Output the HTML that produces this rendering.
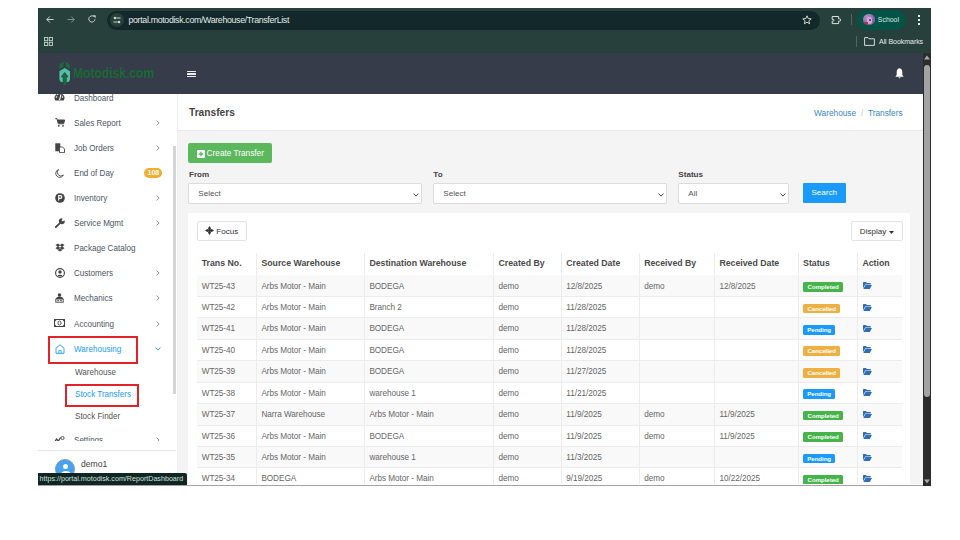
<!DOCTYPE html>
<html><head><meta charset="utf-8">
<style>
*{box-sizing:border-box;margin:0;padding:0}
html,body{width:960px;height:540px;background:#fff;overflow:hidden;font-family:"Liberation Sans",sans-serif}
.abs{position:absolute}
#win{position:absolute;left:38px;top:8px;width:893px;height:478px;overflow:hidden;background:#f4f4f4}
#chrome{position:absolute;left:0;top:0;width:893px;height:45px;background:#27403b}
#addr{position:absolute;left:68.5px;top:2.5px;width:713px;height:19px;border-radius:10px;background:#13282a}
#url{position:absolute;left:90.5px;top:7px;font-size:8.8px;color:#e4ebe9;letter-spacing:-0.33px;white-space:nowrap}
#hdr{position:absolute;left:0;top:45px;width:885px;height:41px;background:#363c4a}
#side{position:absolute;left:0;top:86px;width:140px;height:392px;background:#fff;border-right:1px solid #ededed;overflow:hidden}
#chead{position:absolute;left:140px;top:86px;width:745px;height:37px;background:#fff;border-bottom:1px solid #e9e9e9}
#vscroll{position:absolute;left:885px;top:45px;width:8px;height:433px;background:#2c2c2c}
.si{position:absolute;left:0;width:138px;height:25px;font-size:8.1px;color:#4b5563}
.icw{position:absolute;left:15.8px;top:0;width:12px;height:25px;display:flex;align-items:center;justify-content:center}
.si .t{position:absolute;left:36px;top:0.7px;line-height:25px;white-space:nowrap;font-size:8.65px;transform:scaleX(0.935);transform-origin:0 0}
.si .chev{position:absolute;left:117.8px;top:9.7px}
.si .chevd{position:absolute;left:116.5px;top:10.7px}
.badge{position:absolute;left:106.4px;top:7.8px;width:18px;height:10px;border-radius:5px;background:#f0ad30;color:#fff;font-size:7px;font-weight:bold;text-align:center;line-height:10px}
.sub{position:absolute;left:36.5px;font-size:8.65px;color:#555;line-height:12px;white-space:nowrap;transform:scaleX(0.935);transform-origin:0 0}
#btnCreate{position:absolute;left:150px;top:135.3px;width:84px;height:19.5px;background:#5cb85c;border-radius:2px;color:#fff;font-size:8.1px}
.flbl{position:absolute;top:161px;font-size:8.1px;font-weight:bold;color:#444;line-height:12px}
.sel{position:absolute;top:175.3px;height:20.8px;background:#fff;border:1px solid #dcdcdc;border-radius:2px;font-size:8.1px;color:#555}
.sel span{position:absolute;left:9px;top:0;line-height:20px}
.selchev{position:absolute;right:2px;top:8.5px}
#btnSearch{position:absolute;left:764.6px;top:175px;width:43.3px;height:19.5px;background:#1a9bfc;border-radius:1px;color:#fff;font-size:8.1px;text-align:center;line-height:19.5px}
#card{position:absolute;left:150.3px;top:204.7px;width:722px;height:300px;background:#fff;border-radius:2px}
.bbtn{position:absolute;top:8.8px;height:19.7px;background:#fff;border:1px solid #e3e3e3;border-radius:2px;font-size:8.1px;color:#333}
.hrow,.row{position:absolute;left:0;width:100%}
.th,.td{position:absolute;top:0;height:100%;border-left:1px solid #ececec;padding-left:5px;white-space:nowrap;overflow:hidden}
.th:first-child,.td:first-child{border-left:none;padding-left:5px}
.th,.td{padding-left:4px}
.th{font-size:8.75px;font-weight:bold;color:#4a4a4a;line-height:21px}
.row{border-top:1px solid #ececec}
.td{font-size:8.2px;color:#666;line-height:22.4px;letter-spacing:-0.04px}
.lbl{display:inline-block;height:9.8px;border-radius:1.5px;color:#fff;font-size:6.1px;font-weight:bold;line-height:10px;text-align:center;vertical-align:middle;position:relative;top:0.6px;left:0.1px}
.fold{position:relative;top:0.5px;left:0.5px}
#status{position:absolute;left:0;top:465px;height:12px;padding:0 4px 0 1.5px;background:#0f2624;color:#cfe2dd;font-size:7.15px;line-height:12px;white-space:nowrap;border-top-right-radius:2px}
</style></head><body>
<div id="win">
  <div id="chrome">
    <!-- back -->
    <svg class="abs" style="left:8px;top:8px" width="8" height="8" viewBox="0 0 8 8"><path d="M7.6 3.5H0.8M3.8 0.5L0.8 3.5L3.8 6.5" stroke="#c9d6d2" stroke-width="1" fill="none"/></svg>
    <svg class="abs" style="left:29px;top:8px" width="8" height="8" viewBox="0 0 8 8"><path d="M0.4 3.5H7.2M4.2 0.5L7.2 3.5L4.2 6.5" stroke="#7f9490" stroke-width="1" fill="none"/></svg>
    <svg class="abs" style="left:50px;top:7px" width="8" height="8" viewBox="0 0 8 8"><path d="M7 4.3A3.1 3.1 0 1 1 5.8 1.5" stroke="#c9d6d2" stroke-width="1" fill="none"/><path d="M4.6 0.3H7.6V3.3Z" fill="#c9d6d2"/></svg>
    <div id="addr">
      <div class="abs" style="left:3px;top:2.5px;width:14px;height:14px;border-radius:7px;background:#27403b"></div>
      <svg class="abs" style="left:6px;top:5.5px" width="8" height="8" viewBox="0 0 8 8"><circle cx="2" cy="2" r="1.3" fill="#c9d6d2"/><path d="M3.5 2H7.5M0.5 6H4.5" stroke="#c9d6d2" stroke-width="1"/><circle cx="6" cy="6" r="1.3" fill="#c9d6d2"/></svg>
    </div>
    <div id="url">portal.motodisk.com/Warehouse/TransferList</div>
    <svg class="abs" style="left:764px;top:7px" width="10" height="10" viewBox="0 0 10 10"><path d="M5 0.8L6.2 3.6L9.2 3.8L6.9 5.8L7.6 8.8L5 7.2L2.4 8.8L3.1 5.8L0.8 3.8L3.8 3.6Z" stroke="#e4ebe9" stroke-width="0.9" fill="none"/></svg>
    <svg class="abs" style="left:793px;top:6.5px" width="10" height="10" viewBox="0 0 10 10"><path d="M1.2 1.5H7.6V3.8H8.6A1.1 1.1 0 0 1 8.6 6.1H7.6V8.6H1.2V6.2H2A0.9 0.9 0 0 0 2 4.4H1.2Z" stroke="#e4ebe9" stroke-width="0.95" fill="none" stroke-linejoin="round"/></svg>
    <div class="abs" style="left:813px;top:6px;width:1px;height:11px;background:#4e6560"></div>
    <div class="abs" style="left:819.3px;top:2px;width:48.7px;height:19.5px;border-radius:10px;background:#055347"></div>
    <div class="abs" style="left:825.3px;top:5.8px;width:11.4px;height:11.4px;border-radius:6px;overflow:hidden;background:radial-gradient(circle at 35% 30%,#b792c9 0,#9c6fb3 45%,#6a4a8a 100%)"><div class="abs" style="left:3.5px;top:3px;width:5.5px;height:7px;border-radius:3px;background:#d6a9d4"></div><div class="abs" style="left:5.5px;top:5.5px;width:2px;height:2px;border-radius:1px;background:#4a2a3a"></div><div class="abs" style="left:0;top:8px;width:5px;height:4px;background:#9b3a4a"></div><div class="abs" style="left:9.5px;top:2px;width:2px;height:6px;background:#6a6ab8"></div></div>
    <div class="abs" style="left:839.8px;top:8.3px;font-size:6.95px;color:#d3e8e2">School</div>
    <div class="abs" style="left:880px;top:6px;width:2px;height:12px;background:radial-gradient(circle,#e4ebe9 0.9px,transparent 1.1px) 0 0/2px 4px"></div>
    <!-- bookmarks bar -->
    <svg class="abs" style="left:6px;top:29px" width="9" height="9" viewBox="0 0 9 9"><rect x="0.5" y="0.5" width="3.2" height="3.2" stroke="#c9d6d2" stroke-width="0.9" fill="none"/><rect x="5.3" y="0.5" width="3.2" height="3.2" stroke="#c9d6d2" stroke-width="0.9" fill="none"/><rect x="0.5" y="5.3" width="3.2" height="3.2" stroke="#c9d6d2" stroke-width="0.9" fill="none"/><rect x="5.3" y="5.3" width="3.2" height="3.2" stroke="#c9d6d2" stroke-width="0.9" fill="none"/></svg>
    <div class="abs" style="left:818px;top:28px;width:1px;height:11px;background:#4e6560"></div>
    <svg class="abs" style="left:826px;top:29px" width="11" height="9" viewBox="0 0 11 9"><path d="M0.6 0.6H4L5 1.8H10.4V8.4H0.6Z" stroke="#e4ebe9" stroke-width="0.9" fill="none"/></svg>
    <div class="abs" style="left:841px;top:29.8px;font-size:7.1px;color:#e4ebe9;letter-spacing:-0.1px">All Bookmarks</div>
  </div>
  <div id="hdr">
    <!-- logo -->
    <svg class="abs" style="left:17px;top:5px" width="20" height="30" viewBox="0 0 20 30"><path d="M4.4 6.6L9.7 3L15 6.6V10.9L9.7 7.9L4.4 10.9Z" fill="#1b6b3a"/><rect x="8.4" y="3.6" width="2.6" height="5.2" fill="#363c4a"/><path d="M4.4 13.2L9.7 10L15 13.2V20.5Q15 24.2 11.8 24.2H7.6Q4.4 24.2 4.4 20.5Z" fill="#4fc3a1"/><path d="M9.7 14.6L13 18.8H11.2V27.4H8.2V18.8H6.4Z" fill="#1b6b3a" stroke="#363c4a" stroke-width="0.9"/><path d="M9.7 15.3L12 18.3H10.8V27H8.6V18.3H7.4Z" fill="#1b6b3a"/></svg>
    <div class="abs" style="left:34.8px;top:11.9px;font-size:15.2px;line-height:15.2px;font-weight:bold;color:#1a6836;transform:scaleX(0.795);transform-origin:0 0;white-space:nowrap">Motodisk.com</div>
    <div class="abs" style="left:148.7px;top:17.8px;width:9.4px;height:1.3px;background:#eee;border-radius:0.5px"></div><div class="abs" style="left:148.7px;top:20.4px;width:9.4px;height:1.3px;background:#eee;border-radius:0.5px"></div><div class="abs" style="left:148.7px;top:23px;width:9.4px;height:1.3px;background:#eee;border-radius:0.5px"></div>
    <svg class="abs" style="left:857px;top:15px" width="9" height="11" viewBox="0 0 9 11"><path d="M4.5 0.3C6.8 0.5 7.3 2.5 7.3 4.5V7L8.7 8.7H0.3L1.7 7V4.5C1.7 2.5 2.2 0.5 4.5 0.3Z" fill="#fff"/><path d="M3.3 9.2H5.7L4.5 10.5Z" fill="#fff"/></svg>
  </div>
  <div id="side">
<div class="si" style="top:-9.1px;color:#4b5563"><span class="icw"><svg width="11" height="11" viewBox="0 0 11 11" style="position:relative;top:-1px"><path d="M1.3 9.6A4.9 4.9 0 1 1 9.7 9.6Z" fill="#444"/><path d="M5.5 9L7 3.5" stroke="#fff" stroke-width="1.1"/><circle cx="2.5" cy="6" r="0.8" fill="#fff"/><circle cx="3.6" cy="3.2" r="0.8" fill="#fff"/><circle cx="8.5" cy="6" r="0.8" fill="#fff"/><circle cx="5.5" cy="2.2" r="0.7" fill="#fff"/></svg></span><span class="t">Dashboard</span></div>
<div class="si" style="top:16.1px;color:#4b5563"><span class="icw"><svg width="10" height="9" viewBox="0 0 10 9"><path d="M0.3 0.7H2L3.3 5.8H8.6L9.6 2H2.5" stroke="#444" stroke-width="1" fill="none"/><path d="M2.4 2H9.6L8.6 5.6H3.3Z" fill="#444"/><circle cx="3.8" cy="7.8" r="0.9" fill="#444"/><circle cx="8" cy="7.8" r="0.9" fill="#444"/></svg></span><span class="t">Sales Report</span><svg class="chev" width="4" height="6" viewBox="0 0 4 6"><path d="M0.6 0.6L3.1 3L0.6 5.4" stroke="#7b8593" stroke-width="0.9" fill="none"/></svg></div>
<div class="si" style="top:41.3px;color:#4b5563"><span class="icw"><svg width="10" height="10" viewBox="0 0 10 10"><rect x="0.3" y="0.3" width="5" height="8" fill="#444"/><path d="M4.5 4H7.5L9.5 6V9.6H4.5Z" fill="#fff" stroke="#444" stroke-width="0.9"/></svg></span><span class="t">Job Orders</span><svg class="chev" width="4" height="6" viewBox="0 0 4 6"><path d="M0.6 0.6L3.1 3L0.6 5.4" stroke="#7b8593" stroke-width="0.9" fill="none"/></svg></div>
<div class="si" style="top:66.5px;color:#4b5563"><span class="icw"><svg width="9" height="9" viewBox="0 0 9 9"><path d="M3.5 0.6A4 4 0 1 0 8.4 6A3.3 3.3 0 0 1 3.5 0.6Z" fill="none" stroke="#444" stroke-width="0.9"/></svg></span><span class="t">End of Day</span><span class="badge">108</span></div>
<div class="si" style="top:91.1px;color:#4b5563"><span class="icw"><svg width="10" height="10" viewBox="0 0 10 10"><circle cx="5" cy="5" r="4.8" fill="#444"/><path d="M3.7 7.6V2.6H5.4A1.4 1.4 0 0 1 5.4 5.4H3.7" stroke="#fff" stroke-width="1.1" fill="none"/></svg></span><span class="t">Inventory</span><svg class="chev" width="4" height="6" viewBox="0 0 4 6"><path d="M0.6 0.6L3.1 3L0.6 5.4" stroke="#7b8593" stroke-width="0.9" fill="none"/></svg></div>
<div class="si" style="top:116.2px;color:#4b5563"><span class="icw"><svg width="10" height="10" viewBox="0 0 10 10"><path d="M0.8 9.2L5.2 4.8" stroke="#444" stroke-width="1.8" stroke-linecap="round"/><path d="M4.3 4.5A2.6 2.6 0 0 1 7.8 0.8L6.5 2.3L7.8 3.6L9.3 2.3A2.6 2.6 0 0 1 5.6 5.8Z" fill="#444"/></svg></span><span class="t">Service Mgmt</span><svg class="chev" width="4" height="6" viewBox="0 0 4 6"><path d="M0.6 0.6L3.1 3L0.6 5.4" stroke="#7b8593" stroke-width="0.9" fill="none"/></svg></div>
<div class="si" style="top:141.5px;color:#4b5563"><span class="icw"><svg width="10" height="10" viewBox="0 0 10 10"><path d="M0.5 2L3 0.5L5 2L7 0.5L9.5 2L7.5 3.6L9.5 5.2L7 6.7L5 5.2L3 6.7L0.5 5.2L2.5 3.6Z" fill="#444"/><path d="M2.5 7L5 8.6L7.5 7L5 5.8Z" fill="#444"/><path d="M3.3 3.6L5 2.5L6.7 3.6L5 4.7Z" fill="#fff"/></svg></span><span class="t">Package Catalog</span></div>
<div class="si" style="top:166.7px;color:#4b5563"><span class="icw"><svg width="10" height="10" viewBox="0 0 10 10"><circle cx="5" cy="5" r="4.4" fill="none" stroke="#444" stroke-width="1.1"/><circle cx="5" cy="4" r="1.7" fill="#444"/><path d="M2 8.3A3.3 2.5 0 0 1 8 8.3" fill="#444"/></svg></span><span class="t">Customers</span><svg class="chev" width="4" height="6" viewBox="0 0 4 6"><path d="M0.6 0.6L3.1 3L0.6 5.4" stroke="#7b8593" stroke-width="0.9" fill="none"/></svg></div>
<div class="si" style="top:191.7px;color:#4b5563"><span class="icw"><svg width="9" height="10" viewBox="0 0 9 10"><circle cx="4.5" cy="2" r="1.8" fill="#444"/><path d="M1 6A3.5 2.5 0 0 1 8 6Z" fill="#444"/><rect x="0.8" y="6" width="7.4" height="3.2" fill="none" stroke="#444" stroke-width="0.9"/><circle cx="3" cy="7.6" r="0.8" fill="#444"/><circle cx="6" cy="7.6" r="0.8" fill="#444"/></svg></span><span class="t">Mechanics</span><svg class="chev" width="4" height="6" viewBox="0 0 4 6"><path d="M0.6 0.6L3.1 3L0.6 5.4" stroke="#7b8593" stroke-width="0.9" fill="none"/></svg></div>
<div class="si" style="top:216.9px;color:#4b5563"><span class="icw"><svg width="11" height="8" viewBox="0 0 11 8"><rect x="0.5" y="0.5" width="10" height="7" fill="none" stroke="#444" stroke-width="1"/><path d="M0.5 0.5H3L0.5 3ZM10.5 0.5H8L10.5 3ZM0.5 7.5H3L0.5 5ZM10.5 7.5H8L10.5 5Z" fill="#444"/><ellipse cx="5.5" cy="4" rx="1.6" ry="2" fill="none" stroke="#444" stroke-width="0.9"/></svg></span><span class="t">Accounting</span><svg class="chev" width="4" height="6" viewBox="0 0 4 6"><path d="M0.6 0.6L3.1 3L0.6 5.4" stroke="#7b8593" stroke-width="0.9" fill="none"/></svg></div>
<div class="si" style="top:242.2px;color:#1a9bfc"><span class="icw"><svg width="10" height="10" viewBox="0 0 10 10"><path d="M1 4.2L5 0.8L9 4.2V9.3H1Z" fill="none" stroke="#1a9bfc" stroke-width="0.9"/><path d="M3.8 9.3V6.5H6.2V9.3" fill="none" stroke="#1a9bfc" stroke-width="0.8"/></svg></span><span class="t">Warehousing</span><svg class="chevd" width="6" height="4" viewBox="0 0 6 4"><path d="M0.6 0.6L3 3.1L5.4 0.6" stroke="#1a9bfc" stroke-width="0.9" fill="none"/></svg></div>
<div class="sub" style="top:272.3px">Warehouse</div>
<div class="sub" style="top:294.3px;color:#1a9bfc">Stock Transfers</div>
<div class="abs" style="left:27px;top:289.7px;width:74px;height:23px;border:2px solid #e32227"></div>
<div class="abs" style="left:10.4px;top:242.3px;width:90px;height:27.6px;border:2px solid #e32227"></div>
<div class="sub" style="top:315.6px">Stock Finder</div>
<div class="si" style="top:333.3px;color:#4b5563;height:13.5px;overflow:hidden"><span class="icw"><svg width="11" height="7" viewBox="0 0 11 7"><path d="M0.5 6.5L2.5 3L4.5 5L6.5 1.5" stroke="#444" stroke-width="1.2" fill="none"/><circle cx="8.5" cy="2" r="1.6" fill="none" stroke="#444" stroke-width="0.9"/></svg></span><span class="t">Settings</span><svg class="chev" width="4" height="6" viewBox="0 0 4 6"><path d="M0.6 0.6L3.1 3L0.6 5.4" stroke="#7b8593" stroke-width="0.9" fill="none"/></svg></div>
<div class="abs" style="left:0;top:356px;width:138px;height:1px;background:#e5e5e5"></div>
<div class="abs" style="left:17px;top:365.3px;width:20px;height:20px;border-radius:10px;background:#45a3ef;border:0.6px solid #8a9aa8;overflow:hidden"><div class="abs" style="left:6.8px;top:3.5px;width:5.2px;height:5.2px;border-radius:3px;background:#fff"></div><div class="abs" style="left:4.5px;top:10.5px;width:10px;height:9px;border-radius:5px;background:#fff"></div></div>
<div class="abs" style="left:43px;top:365px;font-size:8.6px;color:#444">demo1</div>
<div class="abs" style="left:135px;top:51.8px;width:2.6px;height:248px;background:#d5d5d5"></div>
</div>

<div id="btnCreate"><svg style="position:absolute;left:8.5px;top:6.5px" width="8" height="8" viewBox="0 0 8 8"><rect x="0" y="0" width="8" height="8" rx="1.2" fill="#fff"/><path d="M4 1.8V6.2M1.8 4H6.2" stroke="#5cb85c" stroke-width="1.4"/></svg><span style="position:absolute;left:18.6px;top:0.8px;line-height:19.5px;font-size:8.25px">Create Transfer</span></div>
<div class="flbl" style="left:151px">From</div>
<div class="flbl" style="left:395.3px">To</div>
<div class="flbl" style="left:640.3px">Status</div>
<div class="sel" style="left:150.3px;width:233.3px"><span>Select</span><svg class="selchev" width="6" height="4" viewBox="0 0 6 4"><path d="M0.6 0.6L3 3.1L5.4 0.6" stroke="#444" stroke-width="1" fill="none"/></svg></div>
<div class="sel" style="left:395.3px;width:233.3px"><span>Select</span><svg class="selchev" width="6" height="4" viewBox="0 0 6 4"><path d="M0.6 0.6L3 3.1L5.4 0.6" stroke="#444" stroke-width="1" fill="none"/></svg></div>
<div class="sel" style="left:640.3px;width:111px"><span>All</span><svg class="selchev" width="6" height="4" viewBox="0 0 6 4"><path d="M0.6 0.6L3 3.1L5.4 0.6" stroke="#444" stroke-width="1" fill="none"/></svg></div>
<div id="btnSearch">Search</div>
<div id="card">
  <div class="bbtn" style="left:9px;width:49.4px"><svg style="position:absolute;left:6.5px;top:3.6px" width="9" height="9" viewBox="0 0 9 9"><path d="M4.5 0L6 2.2L5.3 3.7L6.8 3L9 4.5L6.8 6L5.3 5.3L6 6.8L4.5 9L3 6.8L3.7 5.3L2.2 6L0 4.5L2.2 3L3.7 3.7L3 2.2Z" fill="#333"/></svg><span style="position:absolute;left:18px;top:-0.5px;line-height:19.3px">Focus</span></div>
  <div class="bbtn" style="left:663px;width:52px"><span style="position:absolute;left:7.5px;top:0;line-height:19.3px">Display</span><svg style="position:absolute;left:37px;top:8.5px" width="5" height="3" viewBox="0 0 5 3"><path d="M0 0H5L2.5 3Z" fill="#333"/></svg></div>
</div>
<div id="tbl" style="position:absolute;left:158.7px;top:244.6px;width:705.7px;height:240px">
<div class="hrow" style="top:0;height:22.0px">
<div class="th" style="left:0.0px;width:60.0px">Trans No.</div>
<div class="th" style="left:59.7px;width:108px">Source Warehouse</div>
<div class="th" style="left:167.7px;width:129.1px">Destination Warehouse</div>
<div class="th" style="left:296.8px;width:67.8px">Created By</div>
<div class="th" style="left:364.6px;width:77.9px">Created Date</div>
<div class="th" style="left:442.5px;width:75.2px">Received By</div>
<div class="th" style="left:517.7px;width:84.2px">Received Date</div>
<div class="th" style="left:601.4px;width:59.3px">Status</div>
<div class="th" style="left:660.7px;width:45.0px">Action</div>
</div>
<div class="row" style="border-top-color:transparent;top:22.00px;height:21.43px;background:#f9f9f9">
<div class="td" style="left:0.0px;width:60.0px">WT25-43</div>
<div class="td" style="left:59.7px;width:108px">Arbs Motor - Main</div>
<div class="td" style="left:167.7px;width:129.1px">BODEGA</div>
<div class="td" style="left:296.8px;width:67.8px">demo</div>
<div class="td" style="left:364.6px;width:77.9px">12/8/2025</div>
<div class="td" style="left:442.5px;width:75.2px">demo</div>
<div class="td" style="left:517.7px;width:84.2px">12/8/2025</div>
<div class="td" style="left:601.4px;width:59.3px"><span class="lbl" style="background:#46b34b;width:40px">Completed</span></div>
<div class="td" style="left:660.7px;width:45.0px"><svg class="fold" width="9" height="7" viewBox="0 0 9 7"><path d="M0 0.6Q0 0 0.6 0H3L3.8 0.9H7.2Q7.8 0.9 7.8 1.5V2.4H2.2L0 6.3Z" fill="#2f6fb7"/><path d="M2.5 2.9H9L6.8 7H0.3Z" fill="#2f6fb7"/></svg></div>
</div>
<div class="row" style="top:43.43px;height:21.43px;background:#fff">
<div class="td" style="left:0.0px;width:60.0px">WT25-42</div>
<div class="td" style="left:59.7px;width:108px">Arbs Motor - Main</div>
<div class="td" style="left:167.7px;width:129.1px">Branch 2</div>
<div class="td" style="left:296.8px;width:67.8px">demo</div>
<div class="td" style="left:364.6px;width:77.9px">11/28/2025</div>
<div class="td" style="left:442.5px;width:75.2px"></div>
<div class="td" style="left:517.7px;width:84.2px"></div>
<div class="td" style="left:601.4px;width:59.3px"><span class="lbl" style="background:#efb043;width:37px">Cancelled</span></div>
<div class="td" style="left:660.7px;width:45.0px"><svg class="fold" width="9" height="7" viewBox="0 0 9 7"><path d="M0 0.6Q0 0 0.6 0H3L3.8 0.9H7.2Q7.8 0.9 7.8 1.5V2.4H2.2L0 6.3Z" fill="#2f6fb7"/><path d="M2.5 2.9H9L6.8 7H0.3Z" fill="#2f6fb7"/></svg></div>
</div>
<div class="row" style="top:64.86px;height:21.43px;background:#f9f9f9">
<div class="td" style="left:0.0px;width:60.0px">WT25-41</div>
<div class="td" style="left:59.7px;width:108px">Arbs Motor - Main</div>
<div class="td" style="left:167.7px;width:129.1px">BODEGA</div>
<div class="td" style="left:296.8px;width:67.8px">demo</div>
<div class="td" style="left:364.6px;width:77.9px">11/28/2025</div>
<div class="td" style="left:442.5px;width:75.2px"></div>
<div class="td" style="left:517.7px;width:84.2px"></div>
<div class="td" style="left:601.4px;width:59.3px"><span class="lbl" style="background:#1a9bfc;width:32px">Pending</span></div>
<div class="td" style="left:660.7px;width:45.0px"><svg class="fold" width="9" height="7" viewBox="0 0 9 7"><path d="M0 0.6Q0 0 0.6 0H3L3.8 0.9H7.2Q7.8 0.9 7.8 1.5V2.4H2.2L0 6.3Z" fill="#2f6fb7"/><path d="M2.5 2.9H9L6.8 7H0.3Z" fill="#2f6fb7"/></svg></div>
</div>
<div class="row" style="top:86.29px;height:21.43px;background:#fff">
<div class="td" style="left:0.0px;width:60.0px">WT25-40</div>
<div class="td" style="left:59.7px;width:108px">Arbs Motor - Main</div>
<div class="td" style="left:167.7px;width:129.1px">BODEGA</div>
<div class="td" style="left:296.8px;width:67.8px">demo</div>
<div class="td" style="left:364.6px;width:77.9px">11/28/2025</div>
<div class="td" style="left:442.5px;width:75.2px"></div>
<div class="td" style="left:517.7px;width:84.2px"></div>
<div class="td" style="left:601.4px;width:59.3px"><span class="lbl" style="background:#efb043;width:37px">Cancelled</span></div>
<div class="td" style="left:660.7px;width:45.0px"><svg class="fold" width="9" height="7" viewBox="0 0 9 7"><path d="M0 0.6Q0 0 0.6 0H3L3.8 0.9H7.2Q7.8 0.9 7.8 1.5V2.4H2.2L0 6.3Z" fill="#2f6fb7"/><path d="M2.5 2.9H9L6.8 7H0.3Z" fill="#2f6fb7"/></svg></div>
</div>
<div class="row" style="top:107.72px;height:21.43px;background:#f9f9f9">
<div class="td" style="left:0.0px;width:60.0px">WT25-39</div>
<div class="td" style="left:59.7px;width:108px">Arbs Motor - Main</div>
<div class="td" style="left:167.7px;width:129.1px">BODEGA</div>
<div class="td" style="left:296.8px;width:67.8px">demo</div>
<div class="td" style="left:364.6px;width:77.9px">11/27/2025</div>
<div class="td" style="left:442.5px;width:75.2px"></div>
<div class="td" style="left:517.7px;width:84.2px"></div>
<div class="td" style="left:601.4px;width:59.3px"><span class="lbl" style="background:#efb043;width:37px">Cancelled</span></div>
<div class="td" style="left:660.7px;width:45.0px"><svg class="fold" width="9" height="7" viewBox="0 0 9 7"><path d="M0 0.6Q0 0 0.6 0H3L3.8 0.9H7.2Q7.8 0.9 7.8 1.5V2.4H2.2L0 6.3Z" fill="#2f6fb7"/><path d="M2.5 2.9H9L6.8 7H0.3Z" fill="#2f6fb7"/></svg></div>
</div>
<div class="row" style="top:129.15px;height:21.43px;background:#fff">
<div class="td" style="left:0.0px;width:60.0px">WT25-38</div>
<div class="td" style="left:59.7px;width:108px">Arbs Motor - Main</div>
<div class="td" style="left:167.7px;width:129.1px">warehouse 1</div>
<div class="td" style="left:296.8px;width:67.8px">demo</div>
<div class="td" style="left:364.6px;width:77.9px">11/21/2025</div>
<div class="td" style="left:442.5px;width:75.2px"></div>
<div class="td" style="left:517.7px;width:84.2px"></div>
<div class="td" style="left:601.4px;width:59.3px"><span class="lbl" style="background:#1a9bfc;width:32px">Pending</span></div>
<div class="td" style="left:660.7px;width:45.0px"><svg class="fold" width="9" height="7" viewBox="0 0 9 7"><path d="M0 0.6Q0 0 0.6 0H3L3.8 0.9H7.2Q7.8 0.9 7.8 1.5V2.4H2.2L0 6.3Z" fill="#2f6fb7"/><path d="M2.5 2.9H9L6.8 7H0.3Z" fill="#2f6fb7"/></svg></div>
</div>
<div class="row" style="top:150.58px;height:21.43px;background:#f9f9f9">
<div class="td" style="left:0.0px;width:60.0px">WT25-37</div>
<div class="td" style="left:59.7px;width:108px">Narra Warehouse</div>
<div class="td" style="left:167.7px;width:129.1px">Arbs Motor - Main</div>
<div class="td" style="left:296.8px;width:67.8px">demo</div>
<div class="td" style="left:364.6px;width:77.9px">11/9/2025</div>
<div class="td" style="left:442.5px;width:75.2px">demo</div>
<div class="td" style="left:517.7px;width:84.2px">11/9/2025</div>
<div class="td" style="left:601.4px;width:59.3px"><span class="lbl" style="background:#46b34b;width:40px">Completed</span></div>
<div class="td" style="left:660.7px;width:45.0px"><svg class="fold" width="9" height="7" viewBox="0 0 9 7"><path d="M0 0.6Q0 0 0.6 0H3L3.8 0.9H7.2Q7.8 0.9 7.8 1.5V2.4H2.2L0 6.3Z" fill="#2f6fb7"/><path d="M2.5 2.9H9L6.8 7H0.3Z" fill="#2f6fb7"/></svg></div>
</div>
<div class="row" style="top:172.01px;height:21.43px;background:#fff">
<div class="td" style="left:0.0px;width:60.0px">WT25-36</div>
<div class="td" style="left:59.7px;width:108px">Arbs Motor - Main</div>
<div class="td" style="left:167.7px;width:129.1px">BODEGA</div>
<div class="td" style="left:296.8px;width:67.8px">demo</div>
<div class="td" style="left:364.6px;width:77.9px">11/9/2025</div>
<div class="td" style="left:442.5px;width:75.2px">demo</div>
<div class="td" style="left:517.7px;width:84.2px">11/9/2025</div>
<div class="td" style="left:601.4px;width:59.3px"><span class="lbl" style="background:#46b34b;width:40px">Completed</span></div>
<div class="td" style="left:660.7px;width:45.0px"><svg class="fold" width="9" height="7" viewBox="0 0 9 7"><path d="M0 0.6Q0 0 0.6 0H3L3.8 0.9H7.2Q7.8 0.9 7.8 1.5V2.4H2.2L0 6.3Z" fill="#2f6fb7"/><path d="M2.5 2.9H9L6.8 7H0.3Z" fill="#2f6fb7"/></svg></div>
</div>
<div class="row" style="top:193.44px;height:21.43px;background:#f9f9f9">
<div class="td" style="left:0.0px;width:60.0px">WT25-35</div>
<div class="td" style="left:59.7px;width:108px">Arbs Motor - Main</div>
<div class="td" style="left:167.7px;width:129.1px">warehouse 1</div>
<div class="td" style="left:296.8px;width:67.8px">demo</div>
<div class="td" style="left:364.6px;width:77.9px">11/3/2025</div>
<div class="td" style="left:442.5px;width:75.2px"></div>
<div class="td" style="left:517.7px;width:84.2px"></div>
<div class="td" style="left:601.4px;width:59.3px"><span class="lbl" style="background:#1a9bfc;width:32px">Pending</span></div>
<div class="td" style="left:660.7px;width:45.0px"><svg class="fold" width="9" height="7" viewBox="0 0 9 7"><path d="M0 0.6Q0 0 0.6 0H3L3.8 0.9H7.2Q7.8 0.9 7.8 1.5V2.4H2.2L0 6.3Z" fill="#2f6fb7"/><path d="M2.5 2.9H9L6.8 7H0.3Z" fill="#2f6fb7"/></svg></div>
</div>
<div class="row" style="top:214.87px;height:21.43px;background:#fff">
<div class="td" style="left:0.0px;width:60.0px">WT25-34</div>
<div class="td" style="left:59.7px;width:108px">BODEGA</div>
<div class="td" style="left:167.7px;width:129.1px">Arbs Motor - Main</div>
<div class="td" style="left:296.8px;width:67.8px">demo</div>
<div class="td" style="left:364.6px;width:77.9px">9/19/2025</div>
<div class="td" style="left:442.5px;width:75.2px">demo</div>
<div class="td" style="left:517.7px;width:84.2px">10/22/2025</div>
<div class="td" style="left:601.4px;width:59.3px"><span class="lbl" style="background:#46b34b;width:40px">Completed</span></div>
<div class="td" style="left:660.7px;width:45.0px"><svg class="fold" width="9" height="7" viewBox="0 0 9 7"><path d="M0 0.6Q0 0 0.6 0H3L3.8 0.9H7.2Q7.8 0.9 7.8 1.5V2.4H2.2L0 6.3Z" fill="#2f6fb7"/><path d="M2.5 2.9H9L6.8 7H0.3Z" fill="#2f6fb7"/></svg></div>
</div>
</div>
  <div id="chead">
    <div class="abs" style="left:11px;top:13px;font-size:10.2px;font-weight:bold;color:#444">Transfers</div>
    <div class="abs" style="left:636px;top:13.8px;font-size:8.3px;color:#3b86c6;white-space:nowrap">Warehouse <span style="color:#ccc;padding:0 2.5px">/</span> Transfers</div>
  </div>
  <div id="vscroll">
    <svg class="abs" style="left:1px;top:2px" width="6" height="5" viewBox="0 0 6 5"><path d="M0 4.5L3 0.5L6 4.5Z" fill="#a8a8a8"/></svg>
    <div class="abs" style="left:1.3px;top:11.5px;width:5.4px;height:332px;border-radius:3px;background:#a3a3a3"></div>
    <svg class="abs" style="left:1px;top:426px" width="6" height="5" viewBox="0 0 6 5"><path d="M0 0.5L3 4.5L6 0.5Z" fill="#a8a8a8"/></svg>
  </div>
<div class="abs" style="left:0;top:476px;width:885px;height:1px;background:#fff"></div><div class="abs" style="left:0;top:477px;width:885px;height:1px;background:#a3a3a3"></div>
<div id="status">https://portal.motodisk.com/ReportDashboard</div>
</div>
</body></html>
